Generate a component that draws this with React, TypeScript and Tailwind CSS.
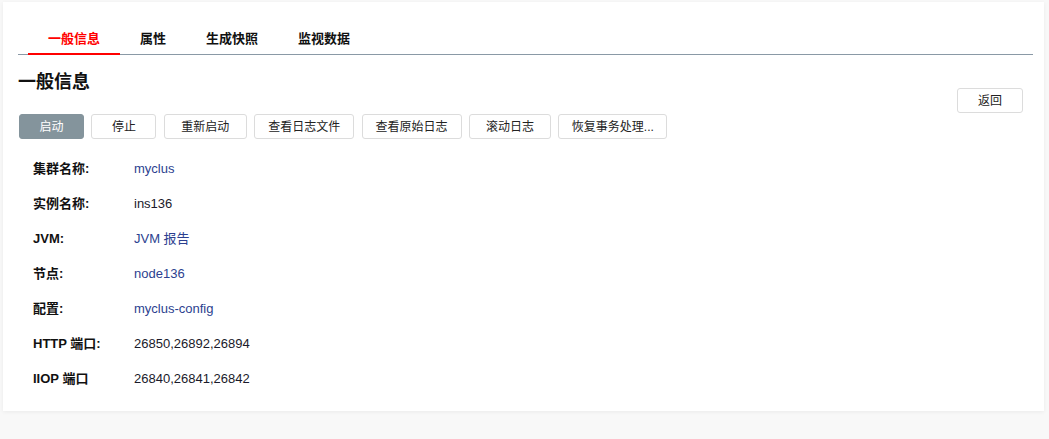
const FONT = '"Liberation Sans", Arial, "Noto Sans CJK SC", sans-serif';

const tabs = ['一般信息', '属性', '生成快照', '监视数据'];

const actions: { label: string; width: string; primary?: boolean }[] = [
  { label: '启动', width: 'w-[65px]', primary: true },
  { label: '停止', width: 'w-[65px]' },
  { label: '重新启动', width: 'w-[83px]' },
  { label: '查看日志文件', width: 'w-[100px]' },
  { label: '查看原始日志', width: 'w-[100px]' },
  { label: '滚动日志', width: 'w-[82px]' },
  { label: '恢复事务处理...', width: 'w-[109px]' },
];

const details: { label: string; value: string; link?: boolean }[] = [
  { label: '集群名称:', value: 'myclus', link: true },
  { label: '实例名称:', value: 'ins136' },
  { label: 'JVM:', value: 'JVM 报告', link: true },
  { label: '节点:', value: 'node136', link: true },
  { label: '配置:', value: 'myclus-config', link: true },
  { label: 'HTTP 端口:', value: '26850,26892,26894' },
  { label: 'IIOP 端口', value: '26840,26841,26842' },
];

export default function App() {
  return (
    <div className="min-h-[439px] w-full bg-[#f8f8f8] pt-[2px] pl-[3px] pr-[5px]" style={{ fontFamily: FONT }}>
      <div className="bg-white pl-[15px] pr-[11px] pt-[22px] pb-[15px] shadow-[0_1px_4px_rgba(0,0,0,0.06)]">
        {/* Tabs */}
        <div className="flex border-b border-[#8a99a6] pl-[10px]">
          {tabs.map((t, i) => (
            <div
              key={t}
              className={`-mb-px flex h-[31px] items-center px-[20px] text-[13px] font-bold ${
                i === 0 ? 'border-b-2 border-[#ff0000] text-[#ff0000]' : 'border-b-2 border-transparent text-[#111]'
              }`}
            >
              {t}
            </div>
          ))}
        </div>

        {/* Heading + back */}
        <div className="flex items-start justify-between">
          <h1 className="mt-[15px] text-[18px] font-bold leading-[24px] text-[#111]">一般信息</h1>
          <button className="mt-[33px] mr-[10px] h-[25px] w-[66px] rounded-[3px] border border-[#dcdcdc] bg-white text-[12px] text-[#222]">
            返回
          </button>
        </div>

        {/* Actions */}
        <div className="mt-px ml-px flex gap-[7.4px]">
          {actions.map((a) => (
            <button
              key={a.label}
              className={`h-[25px] ${a.width} rounded-[3px] border text-[12px] ${
                a.primary ? 'border-[#84949c] bg-[#84949c] text-white' : 'border-[#dcdcdc] bg-white text-[#222]'
              }`}
            >
              {a.label}
            </button>
          ))}
        </div>

        {/* Details */}
        <div className="mt-[12px] pl-[15px]">
          {details.map((d) => (
            <div key={d.label} className="flex h-[35px] items-center text-[13px]">
              <div className="w-[101px] font-bold text-[#111]">{d.label}</div>
              <div className={d.link ? 'text-[#2c3f8f]' : 'text-[#1a1a2a]'}>{d.value}</div>
            </div>
          ))}
        </div>
      </div>
    </div>
  );
}
